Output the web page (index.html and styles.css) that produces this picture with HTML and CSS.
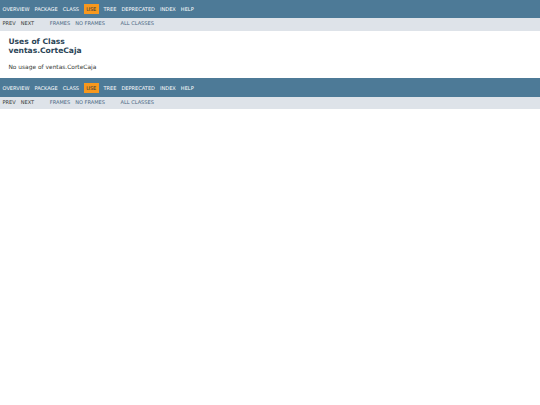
FILE: index.html
```html
<!DOCTYPE html>
<html lang="en">
<head>
<meta charset="utf-8">
<title>Uses of Class ventas.CorteCaja</title>
<link rel="stylesheet" href="styles.css">
</head>
<body>
<div class="topNav">
<ul class="navList" title="Navigation">
<li><a href="#">Overview</a></li>
<li><a href="#">Package</a></li>
<li><a href="#">Class</a></li>
<li class="navBarCell1Rev">Use</li>
<li><a href="#">Tree</a></li>
<li><a href="#">Deprecated</a></li>
<li><a href="#">Index</a></li>
<li><a href="#">Help</a></li>
</ul>
</div>
<div class="subNav">
<ul class="navList">
<li>Prev</li>
<li>Next</li>
</ul>
<ul class="navList">
<li><a href="#">Frames</a></li>
<li><a href="#">No&nbsp;Frames</a></li>
</ul>
<ul class="navList">
<li><a href="#">All&nbsp;Classes</a></li>
</ul>
<div class="subNavTail"></div>
</div>
<div class="header">
<h2 class="title">Uses of Class<br>ventas.CorteCaja</h2>
</div>
<div class="classUseContainer">No usage of ventas.CorteCaja</div>
<div class="bottomNav">
<ul class="navList" title="Navigation">
<li><a href="#">Overview</a></li>
<li><a href="#">Package</a></li>
<li><a href="#">Class</a></li>
<li class="navBarCell1Rev">Use</li>
<li><a href="#">Tree</a></li>
<li><a href="#">Deprecated</a></li>
<li><a href="#">Index</a></li>
<li><a href="#">Help</a></li>
</ul>
</div>
<div class="subNav">
<ul class="navList">
<li>Prev</li>
<li>Next</li>
</ul>
<ul class="navList">
<li><a href="#">Frames</a></li>
<li><a href="#">No&nbsp;Frames</a></li>
</ul>
<ul class="navList">
<li><a href="#">All&nbsp;Classes</a></li>
</ul>
<div class="subNavTail"></div>
</div>
</body>
</html>
```
FILE: styles.css
```css
body {
  background-color: #ffffff;
  color: #353833;
  font-family: 'DejaVu Sans', Arial, Helvetica, sans-serif;
  font-size: 5.906px;
  margin: 0;
}
a:link, a:visited {
  text-decoration: none;
  color: #4A6782;
}
.topNav, .bottomNav {
  background-color: #4D7A97;
  color: #FFFFFF;
  display: flow-root;
  padding: 4.22px 0 0 0;
  height: 14.17px;
  overflow: hidden;
  font-size: 5.0625px;
}
.bottomNav {
  margin-top: 4.22px;
}
.topNav a:link, .topNav a:visited, .bottomNav a:link, .bottomNav a:visited {
  color: #FFFFFF;
  text-decoration: none;
  text-transform: uppercase;
}
.subNav {
  background-color: #dee3e9;
  display: flow-root;
  overflow: hidden;
  font-size: 5.0625px;
}
.subNavTail {
  clear: left;
  float: left;
  padding: 0 0 2.11px 2.53px;
}
ul.navList {
  float: left;
  margin: 0 10.55px 0 0;
  padding: 0;
}
ul.navList li {
  list-style: none;
  float: left;
  padding: 2.11px 2.53px;
  text-transform: uppercase;
}
.navBarCell1Rev {
  background-color: #F8981D;
  color: #253441;
  margin: 0 2.11px;
}
.header {
  margin: 0 8.44px;
  padding: 2.3px 0 0 0;
}
.title {
  color: #2c4557;
  margin: 4.22px 0;
  font-size: 7.59px;
}
.classUseContainer {
  padding: 4.4px 8.44px;
}
```
